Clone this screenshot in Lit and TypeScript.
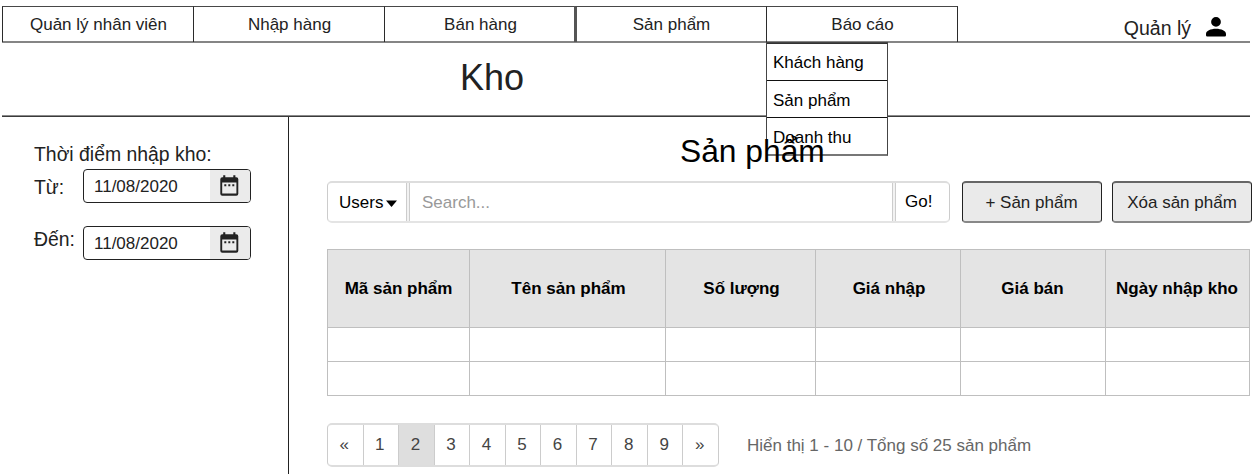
import { LitElement, html, css, svg } from "lit";
import { customElement } from "lit/decorators.js";
import { classMap } from "lit/directives/class-map.js";

const NAV = ["Quản lý nhân viên", "Nhập hàng", "Bán hàng", "Sản phẩm", "Báo cáo"];
const REPORTS = ["Khách hàng", "Sản phẩm", "Doanh thu"];
const COLUMNS = ["Mã sản phẩm", "Tên sản phẩm", "Số lượng", "Giá nhập", "Giá bán", "Ngày nhập kho"];
const PAGES = ["«", "1", "2", "3", "4", "5", "6", "7", "8", "9", "»"];

const calendar = svg`
  <path fill-rule="evenodd" d="M3.2 0.3h2.1v1.9h8V0.3h2.1v1.9h0.9a2 2 0 0 1 2 2V18.7a2 2 0 0 1-2 2H2.3a2 2 0 0 1-2-2V4.2a2 2 0 0 1 2-2h0.9zM2.2 7.6V18.6h14.2V7.6z"/>
  <path d="M4.3 9.3h2v2h-2zM8.3 9.3h2v2h-2zM12.3 9.3h2v2h-2z"/>`;

@customElement("app-root")
export class AppRoot extends LitElement {
  static styles = css`
    :host {
      display: flex;
      flex-direction: column;
      box-sizing: border-box;
      width: 1259px;
      height: 474px;
      padding: 6px 0 0 2px;
      overflow: hidden;
      background: #fff;
      color: #222;
      font: 17px/20px "Liberation Sans", Arial, sans-serif;
    }
    * { box-sizing: border-box; }
    .top {
      display: flex;
      width: 1248px;
      height: 37px;
      flex: none;
      background: linear-gradient(#858585, #858585) 0 35px / 100% 2px no-repeat;
    }
    .tab {
      position: relative;
      width: 191px;
      height: 36px;
      border-left: 1px solid #2b2b2b;
      border-top: 1px solid #484848;
      text-align: center;
      padding: 8px 0 0 1px;
    }
    .tab:nth-child(4) { border-left-width: 3px; border-left-color: #555; width: 193px; margin-left: -1px; padding-right: 2px; }
    .tab:nth-child(5) { width: 192px; margin-left: -1px; border-right: 1px solid #2b2b2b; padding-left: 1px; }
    .menu {
      position: absolute;
      z-index: 1;
      left: -1px;
      top: 35px;
      width: 122px;
      background: #fff;
      border: 1px solid #444;
      border-bottom: 2px solid #777;
      color: #000;
      text-align: left;
    }
    .entry { height: 37px; padding: 10px 0 0 6px; border-top: 1px solid #111; white-space: nowrap; }
    .entry:first-child { border-top-color: #333; padding-top: 9px; }
    .user {
      display: flex;
      margin-left: auto;
      padding: 11px 24px 0 0;
      gap: 15px;
      font-size: 19.5px;
      line-height: 23px;
    }
    .person { width: 20px; height: 20px; fill: #000; }
    .title {
      width: 1248px;
      height: 74px;
      flex: none;
      padding: 14px 0 0 458px;
      background: linear-gradient(#8a8a8a 50%, #3a3a3a 50%) 0 100% / 100% 2px no-repeat;
      font-size: 36px;
      line-height: 42px;
    }
    .body { display: flex; flex: 1; }
    .side {
      width: 287px;
      border-right: 1px solid #222;
      padding: 26px 0 0 32px;
      font-size: 19.4px;
      line-height: 22px;
    }
    .caption { height: 26px; }
    .range { display: flex; height: 57px; }
    .rlabel { width: 49px; padding-top: 7px; }
    .range:last-child .rlabel { padding-top: 2px; }
    .date {
      display: flex;
      width: 168px;
      height: 34px;
      border: 1px solid #222;
      border-radius: 4px;
      overflow: hidden;
      font-size: 17px;
    }
    .value { flex: 1; padding: 6px 0 0 10px; }
    .cal { width: 40px; background: #ebebeb; padding: 5px 0 0 10px; }
    .cal svg { display: block; fill: #222; }
    .main { flex: 1; padding: 0 0 0 38px; }
    h1 {
      position: relative;
      z-index: 2;
      margin: 0;
      height: 64px;
      padding: 16px 0 0 353px;
      font-size: 31.75px;
      line-height: 37px;
      font-weight: 400;
      color: #000;
    }
    .tools { display: flex; width: 925px; height: 42px; }
    .search {
      display: flex;
      width: 623px;
      border: 1px solid #ccc;
      border-top: 2px solid #ddd;
      border-bottom: 2px solid #e4e4e4;
      border-radius: 5px;
      color: #000;
    }
    .kind { width: 77px; display: flex; padding: 10px 0 0 11px; gap: 3px; }
    .arrow { margin-top: 7px; width: 11px; height: 7px; fill: #000; flex: none; }
    .query { flex: 1; padding: 10px 0 0 12px; color: #999; border: solid #ccc; border-width: 0 1px; box-shadow: 0 0 0 2px #f2f2f2, 0 0 0 3px #ccc; clip-path: inset(0 -4px); margin: 0 2px 0 4px; }
    .go { width: 54px; padding: 9px 0 0 10px; }
    .btn {
      width: 140px;
      margin-left: 12px;
      border: 1px solid #222;
      border-top: 2px solid #666;
      border-bottom: 2px solid #888;
      border-radius: 4px;
      background: #eaeaea;
      text-align: center;
      padding: 10px 1px 0 0;
    }
    .btn + .btn { margin-left: 10px; padding-right: 0; }
    table {
      width: 923px;
      margin-top: 26px;
      border-collapse: collapse;
      table-layout: fixed;
      color: #000;
    }
    th, td { border: 1px solid #bfbfbf; padding: 0; }
    th { height: 78px; background: #e4e4e4; white-space: nowrap; }
    td { height: 34px; }
    .c0 { width: 142px; }
    .c1 { width: 196px; padding-left: 2px; }
    .c2 { width: 150px; padding-left: 2px; }
    .c3, .c4 { width: 145px; }
    .c3 { padding-left: 2px; }
    .c4, .c5 { padding-right: 1px; }
    .foot { display: flex; margin-top: 27px; height: 44px; }
    .pages {
      display: flex;
      width: 392px;
      border: 1px solid #ccc;
      border-top: 2px solid #ddd;
      border-bottom: 2px solid #ddd;
      border-radius: 5px;
      overflow: hidden;
      color: #444;
    }
    .page { flex: 1; text-align: center; padding: 10px 2px 0 0; border-left: 1px solid #ccc; }
    .page:first-child { border-left: 0; }
    .current { background: #dedede; }
    .count { padding: 13px 0 0 28px; color: #666; font-size: 17px; }
  `;

  private dateRow(label: string) {
    return html`<div class="range">
      <div class="rlabel">${label}</div>
      <div class="date">
        <div class="value">11/08/2020</div>
        <div class="cal"><svg width="19" height="21" viewBox="0 0 19 21">${calendar}</svg></div>
      </div>
    </div>`;
  }

  render() {
    return html`
      <nav class="top">
        ${NAV.map((n, i) => html`<div class="tab">${n}${i === 4
          ? html`<div class="menu">${REPORTS.map((r) => html`<div class="entry">${r}</div>`)}</div>`
          : ""}</div>`)}
        <div class="user">
          <span>Quản lý</span>
          <svg class="person" viewBox="4 4 16 16"><path d="M12 4a3.9 3.9 0 1 0 0 7.8 3.9 3.9 0 0 0 0-7.8zM12 13.4c-4.4 0-8 1.8-8 4.1v1a1 1 0 0 0 1 1h14a1 1 0 0 0 1-1v-1c0-2.3-3.6-4.1-8-4.1z"/></svg>
        </div>
      </nav>
      <div class="title">Kho</div>
      <div class="body">
        <aside class="side">
          <div class="caption">Thời điểm nhập kho:</div>
          ${this.dateRow("Từ:")}${this.dateRow("Đến:")}
        </aside>
        <main class="main">
          <h1>Sản phẩm</h1>
          <div class="tools">
            <div class="search">
              <div class="kind"><span>Users</span><svg class="arrow" viewBox="0 0 11 7"><path d="M0 0.5h11L5.5 7z"/></svg></div>
              <div class="query">Search...</div>
              <div class="go">Go!</div>
            </div>
            <div class="btn">+ Sản phẩm</div>
            <div class="btn">Xóa sản phẩm</div>
          </div>
          <table>
            <thead><tr>${COLUMNS.map((c, i) => html`<th class="c${i}">${c}</th>`)}</tr></thead>
            <tbody>${[0, 1].map(() => html`<tr>${COLUMNS.map(() => html`<td></td>`)}</tr>`)}</tbody>
          </table>
          <div class="foot">
            <div class="pages">${PAGES.map((p) => html`<div class=${classMap({ page: true, current: p === "2" })}>${p}</div>`)}</div>
            <div class="count">Hiển thị 1 - 10 / Tổng số 25 sản phẩm</div>
          </div>
        </main>
      </div>`;
  }
}
